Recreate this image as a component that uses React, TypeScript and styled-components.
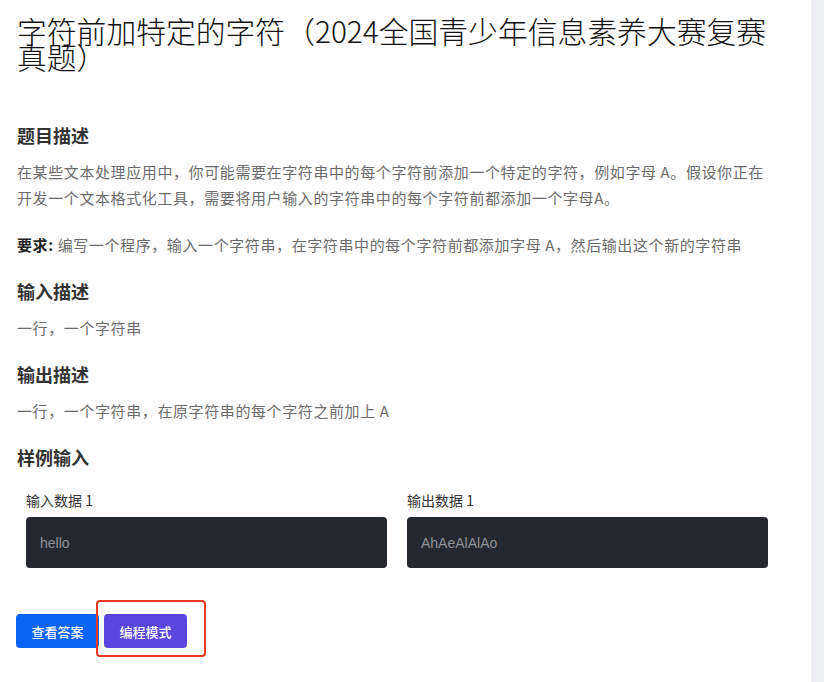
import styled, { createGlobalStyle } from 'styled-components';

const GlobalStyle = createGlobalStyle`
  html, body {
    margin: 0;
    padding: 0;
    background: #ffffff;
  }
  body {
    font-family: "Noto Sans CJK SC", "Noto Sans", sans-serif;
    color: #333333;
  }
`;

const Layout = styled.div`
  display: flex;
  min-height: 682px;
`;

const Main = styled.main`
  flex: 1;
  padding: 17px 34px 30px 17px;
`;

const Rail = styled.aside`
  width: 13px;
  background: #eeeff2;
`;

const Title = styled.h1`
  margin: 0 0 54px;
  font-size: 29.8px;
  line-height: 26px;
  font-weight: 300;
  color: #111111;
`;

const Heading = styled.h2`
  margin: 21px 0 12px;
  font-size: 18px;
  line-height: 24px;
  font-weight: 700;
  color: #333333;
`;

const Text = styled.p`
  margin: 0 0 21px;
  font-size: 15px;
  line-height: 26px;
  letter-spacing: 0.6px;
  color: #6b6b6b;
  &:last-child {
    margin-bottom: 0;
  }
`;

const Strong = styled.strong`
  color: #222222;
  font-weight: 700;
`;

const Samples = styled.div`
  display: grid;
  grid-template-columns: 1fr 1fr;
  gap: 20px;
  padding: 9px 9px 0;
`;

const Sample = styled.div`
  display: flex;
  flex-direction: column;
  gap: 7px;
`;

const Label = styled.div`
  font-size: 14px;
  line-height: 20px;
  color: #333333;
`;

const CodeBox = styled.pre`
  margin: 0;
  height: 51px;
  box-sizing: border-box;
  display: flex;
  align-items: center;
  padding: 0 14px;
  border-radius: 4px;
  background: #252830;
  color: #8f9298;
  font-family: "Liberation Sans", Arial, sans-serif;
  font-size: 14px;
`;

const Actions = styled.div`
  display: flex;
  gap: 5px;
  margin: 46px 0 0 -1px;
`;

const Button = styled.button<{ $tone: 'blue' | 'purple' }>`
  position: relative;
  width: 83px;
  height: 34px;
  border: none;
  border-radius: 4px;
  background: ${({ $tone }) => ($tone === 'blue' ? '#0a64f5' : '#5b45df')};
  color: #ffffff;
  font-family: "Noto Sans CJK SC", sans-serif;
  font-size: 13px;
  font-weight: 500;
  cursor: pointer;
`;

const Highlight = styled.span`
  position: absolute;
  left: -8px;
  top: -14px;
  right: -19px;
  bottom: -9px;
  border: 2px solid #e6391f;
  border-radius: 4px;
  pointer-events: none;
`;

export default function App() {
  return (
    <>
      <GlobalStyle />
      <Layout>
        <Main>
          <Title>字符前加特定的字符（2024全国青少年信息素养大赛复赛真题）</Title>

          <Heading>题目描述</Heading>
          <Text>
            在某些文本处理应用中，你可能需要在字符串中的每个字符前添加一个特定的字符，例如字母 A。假设你正在开发一个文本格式化工具，需要将用户输入的字符串中的每个字符前都添加一个字母A。
          </Text>
          <Text>
            <Strong>要求:</Strong> 编写一个程序，输入一个字符串，在字符串中的每个字符前都添加字母 A，然后输出这个新的字符串
          </Text>

          <Heading>输入描述</Heading>
          <Text>一行，一个字符串</Text>

          <Heading>输出描述</Heading>
          <Text>一行，一个字符串，在原字符串的每个字符之前加上 A</Text>

          <Heading>样例输入</Heading>
          <Samples>
            <Sample>
              <Label>输入数据 1</Label>
              <CodeBox>hello</CodeBox>
            </Sample>
            <Sample>
              <Label>输出数据 1</Label>
              <CodeBox>AhAeAlAlAo</CodeBox>
            </Sample>
          </Samples>

          <Actions>
            <Button $tone="blue">查看答案</Button>
            <Button $tone="purple">
              编程模式
              <Highlight />
            </Button>
          </Actions>
        </Main>
        <Rail />
      </Layout>
    </>
  );
}
